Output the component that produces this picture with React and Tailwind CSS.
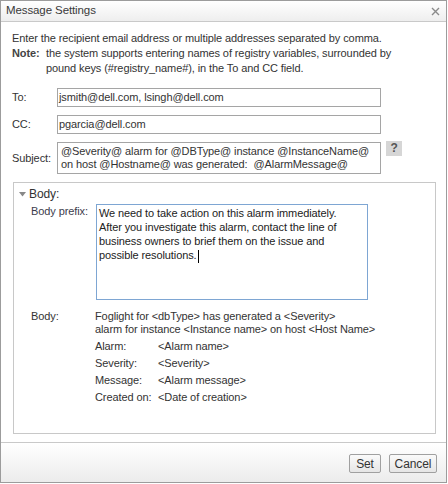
const font = { fontFamily: "'Liberation Sans', Arial, sans-serif" };

function Field({ label, children, h = "h-[19px]", extra }) {
  return (
    <div className="flex items-center">
      <div className="w-[45px] shrink-0">{label}</div>
      <div className={`w-[324px] ${h} border border-[#a5a5a5] bg-white px-[1px] flex items-center`}>{children}</div>
      {extra}
    </div>
  );
}

function InfoRow({ label, value }) {
  return (
    <div className="flex h-[17px] items-center">
      <div className="w-[63px] shrink-0">{label}</div>
      <div>{value}</div>
    </div>
  );
}

export default function App() {
  return (
    <div className="w-[447px] h-[483px] border border-[#9c9c9c] bg-white flex flex-col text-[11px] tracking-[-0.1px] text-[#333]" style={font}>
      {/* title bar */}
      <div className="h-[21px] shrink-0 border-b border-[#c9c9c9] bg-linear-to-b from-white to-[#eeeeee] flex items-center justify-between pl-[5px] pr-[5px]">
        <span className="text-[11.5px] text-[#3a3a3a]">Message Settings</span>
        <svg width="9" height="9" viewBox="0 0 9 9" className="mr-[1px]">
          <path d="M1 1 L8 8 M8 1 L1 8" stroke="#8a8a8a" strokeWidth="1.4" />
        </svg>
      </div>

      {/* content */}
      <div className="flex-1 pt-[9px] pl-[11px] leading-[15px]">
        <div>Enter the recipient email address or multiple addresses separated by comma.</div>
        <div className="flex">
          <span className="font-bold w-[34px] shrink-0 text-[#444]">Note:</span>
          <span className="w-[362px]">the system supports entering names of registry variables, surrounded by pound keys (#registry_name#), in the To and CC field.</span>
        </div>

        <div className="mt-[12px] flex flex-col gap-[8px]">
          <Field label="To:">
            <span className="leading-[13px]">jsmith@dell.com, lsingh@dell.com</span>
          </Field>
          <Field label="CC:">
            <span className="leading-[13px]">pgarcia@dell.com</span>
          </Field>
          <div className="flex items-start">
            <div className="w-[45px] shrink-0 h-[32px] flex items-center">Subject:</div>
            <div className="w-[324px] h-[32px] border border-[#a5a5a5] bg-white pl-[3px] pt-[2px] leading-[13px]">
              @Severity@ alarm for @DBType@ instance @InstanceName@<br />
              on host @Hostname@ was generated: &nbsp;@AlarmMessage@
            </div>
            <div className="ml-[5px] -mt-[1px] w-[16px] h-[15px] bg-[#d6d6d6] flex items-center justify-center text-[12px] font-bold text-[#555]">?</div>
          </div>
        </div>

        {/* body fieldset */}
        <div className="mt-[8px] ml-[1px] w-[423px] h-[252px] border border-[#c8c8c8]">
          <div className="pt-[3px] pl-[5px] h-[19px] flex items-center gap-[3px] leading-[16px]">
            <svg width="7" height="5" viewBox="0 0 7 5"><path d="M0 0 L7 0 L3.5 4.5 Z" fill="#888" /></svg>
            <span className="text-[12px] text-[#333]">Body:</span>
          </div>
          <div className="mt-[2px] pl-[17px] flex items-start">
            <div className="w-[65px] shrink-0 leading-[14px] text-[#3c3c4c]">Body prefix:</div>
            <div className="w-[272px] h-[96px] border border-[#7ea6d3] pl-[2px] pt-[1px] leading-[14px] text-[#222]">
              We need to take action on this alarm immediately.<br />
              After you investigate this alarm, contact the line of<br />
              business owners to brief them on the issue and<br />
              possible resolutions.<span className="inline-block w-px h-[13px] bg-black align-middle ml-[1px]"></span>
            </div>
          </div>
          <div className="mt-[10px] pl-[17px] flex items-start leading-[13px]">
            <div className="w-[64px] shrink-0">Body:</div>
            <div>
              <div>Foglight for &lt;dbType&gt; has generated a &lt;Severity&gt;</div>
              <div>alarm for instance &lt;Instance name&gt; on host &lt;Host Name&gt;</div>
              <div className="mt-[2px]">
                <InfoRow label="Alarm:" value="<Alarm name>" />
                <InfoRow label="Severity:" value="<Severity>" />
                <InfoRow label="Message:" value="<Alarm message>" />
                <InfoRow label="Created on:" value="<Date of creation>" />
              </div>
            </div>
          </div>
        </div>
      </div>

      {/* footer */}
      <div className="h-[40px] shrink-0 border-t border-[#c9c9c9] bg-linear-to-b from-white to-[#ececec] flex items-center justify-end gap-[8px] pr-[9px] pt-[2px]">
        <button className="w-[32px] h-[19px] border border-[#a0a0a0] rounded-[2px] bg-linear-to-b from-[#fafafa] to-[#e6e6e6] text-[12px] text-[#333] leading-none">Set</button>
        <button className="w-[48px] h-[19px] border border-[#a0a0a0] rounded-[2px] bg-linear-to-b from-[#fafafa] to-[#e6e6e6] text-[12px] text-[#333] leading-none">Cancel</button>
      </div>
    </div>
  );
}
